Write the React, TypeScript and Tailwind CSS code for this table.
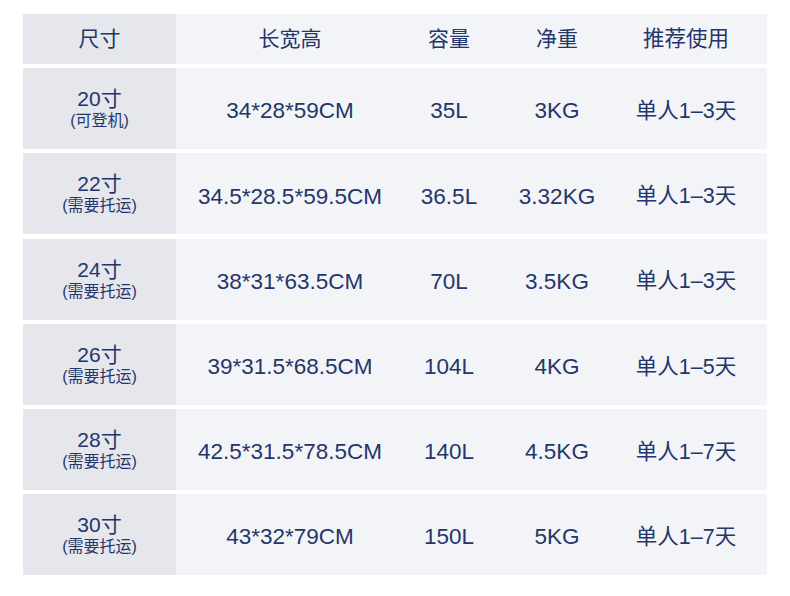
import React from 'react';

type Row = {
  size: string;
  note: string;
  dims: string;
  volume: string;
  weight: string;
  usage: string;
};

const rows: Row[] = [
  { size: '20寸', note: '(可登机)', dims: '34*28*59CM', volume: '35L', weight: '3KG', usage: '单人1–3天' },
  { size: '22寸', note: '(需要托运)', dims: '34.5*28.5*59.5CM', volume: '36.5L', weight: '3.32KG', usage: '单人1–3天' },
  { size: '24寸', note: '(需要托运)', dims: '38*31*63.5CM', volume: '70L', weight: '3.5KG', usage: '单人1–3天' },
  { size: '26寸', note: '(需要托运)', dims: '39*31.5*68.5CM', volume: '104L', weight: '4KG', usage: '单人1–5天' },
  { size: '28寸', note: '(需要托运)', dims: '42.5*31.5*78.5CM', volume: '140L', weight: '4.5KG', usage: '单人1–7天' },
  { size: '30寸', note: '(需要托运)', dims: '43*32*79CM', volume: '150L', weight: '5KG', usage: '单人1–7天' },
];

const font = { fontFamily: '"Liberation Sans", "Noto Sans CJK SC", sans-serif' };

// widths of the columns on the light side: dims / volume / weight / usage
const Cells = ({ cells, size }: { cells: string[]; size: string }) => (
  <div className={`flex flex-1 items-center bg-[#f3f4f7] pr-[15px] ${size}`}>
    <div className="w-[228px] text-center">{cells[0]}</div>
    <div className="w-[90px] text-center">{cells[1]}</div>
    <div className="w-[126px] text-center">{cells[2]}</div>
    <div className="flex-1 text-center text-[21.5px]">{cells[3]}</div>
  </div>
);

export default function App() {
  return (
    <div className="w-[790px] h-[596px] bg-white pt-[14px] pl-[23px] text-[#24366a]" style={font}>
      <div className="w-[744px] flex flex-col gap-[4.2px]">
        {/* header */}
        <div className="flex h-[50px]">
          <div className="w-[153px] bg-[#e5e7ec] flex items-center justify-center text-[21px]">尺寸</div>
          <Cells cells={['长宽高', '容量', '净重', '推荐使用']} size="text-[21px]" />
        </div>

        {rows.map((r) => (
          <div key={r.size} className="flex h-[81px]">
            <div className="w-[153px] bg-[#e5e7ec] flex flex-col items-center justify-center">
              <div className="text-[21px] leading-[24px]">{r.size}</div>
              <div className="text-[16px] leading-[19px]">{r.note}</div>
            </div>
            <Cells cells={[r.dims, r.volume, r.weight, r.usage]} size="text-[22.5px] pt-[5px]" />
          </div>
        ))}
      </div>
    </div>
  );
}
